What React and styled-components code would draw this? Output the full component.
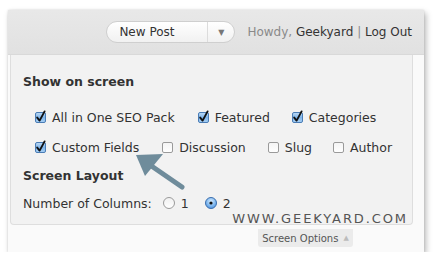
import React from "react";
import styled, { createGlobalStyle } from "styled-components";

const Global = createGlobalStyle`
  html, body { margin: 0; padding: 0; background: #ffffff; }
  body { font-family: "DejaVu Sans", "Liberation Sans", sans-serif; }
`;

const Frame = styled.div`
  position: relative;
  margin: 10px 0 0 8px;
  width: 416px;
  height: 242px;
  background: #fafafa;
  box-shadow: 2px 3px 6px rgba(0, 0, 0, 0.28), 0 0 2px rgba(0, 0, 0, 0.12);
  display: flex;
  flex-direction: column;
`;

const Header = styled.div`
  height: 45px;
  flex: none;
  display: flex;
  align-items: center;
  justify-content: flex-end;
  padding-right: 12px;
  background: linear-gradient(#e8e8e8, #e1e1e1);
  border-bottom: 1px solid #d9d9d9;
  box-sizing: border-box;
`;

const Select = styled.div`
  width: 129px;
  height: 22px;
  box-sizing: border-box;
  border: 1px solid #cfcfcf;
  border-radius: 11px;
  background: linear-gradient(#ffffff, #f1f1f1);
  display: flex;
  align-items: center;
  margin-right: 12px;
  font-size: 12px;
  color: #333;
`;

const SelectLabel = styled.span`
  flex: 1;
  padding-left: 12px;
`;

const SelectArrow = styled.span`
  width: 26px;
  height: 100%;
  border-left: 1px solid #dcdcdc;
  display: flex;
  align-items: center;
  justify-content: center;
  font-size: 8px;
  color: #777;
`;

const Greeting = styled.div`
  font-size: 12px;
  color: #333;
`;

const Muted = styled.span`
  color: #8a8a8a;
`;

const Body = styled.div`
  flex: 1;
  display: flex;
  flex-direction: column;
  padding: 0 11px 0 2px;
`;

const Panel = styled.div`
  position: relative;
  height: 170px;
  box-sizing: border-box;
  background: #f2f2f2;
  border: 1px solid #dedede;
  border-top: none;
  border-radius: 0 0 4px 4px;
  padding: 17px 0 0 12px;
  color: #333;
  font-size: 12.5px;
`;

const Heading = styled.div`
  font-weight: bold;
  font-size: 12.5px;
  color: #333;
  height: 20px;
  line-height: 20px;
  margin-top: ${(p) => p.$mt || 0}px;
`;

const Row = styled.div`
  display: flex;
  align-items: center;
  height: 20px;
  margin-top: ${(p) => p.$mt || 0}px;
  padding-left: ${(p) => p.$pl || 0}px;
`;

const Item = styled.label`
  display: flex;
  align-items: center;
  gap: 6px;
  margin-right: ${(p) => p.$mr}px;
  white-space: nowrap;
`;

const Box = styled.svg`
  flex: none;
  overflow: visible;
`;

const Checkbox = ({ checked }) => (
  <Box width="11" height="11" viewBox="0 0 11 11">
    <defs>
      <linearGradient id="cbOn" x1="0" y1="0" x2="0" y2="1">
        <stop offset="0" stopColor="#bfdcf7" />
        <stop offset="0.5" stopColor="#7fb5ea" />
        <stop offset="1" stopColor="#a9d1f5" />
      </linearGradient>
      <linearGradient id="cbOff" x1="0" y1="0" x2="0" y2="1">
        <stop offset="0" stopColor="#f4f4f4" />
        <stop offset="1" stopColor="#ffffff" />
      </linearGradient>
    </defs>
    <rect
      x="0.5"
      y="0.5"
      width="10"
      height="10"
      rx="1.5"
      fill={checked ? "url(#cbOn)" : "url(#cbOff)"}
      stroke={checked ? "#4a7cb5" : "#9a9a9a"}
    />
    {checked && (
      <path
        d="M2.2 5.6 L4.6 8.6 L9.6 -0.6"
        fill="none"
        stroke="#111"
        strokeWidth="1.9"
        strokeLinecap="round"
        strokeLinejoin="round"
      />
    )}
  </Box>
);

const Radio = ({ checked }) => (
  <Box width="12" height="12" viewBox="0 0 12 12">
    <defs>
      <radialGradient id="rdOn" cx="0.5" cy="0.35" r="0.7">
        <stop offset="0" stopColor="#d6ecff" />
        <stop offset="0.6" stopColor="#7db6ee" />
        <stop offset="1" stopColor="#4a8ad8" />
      </radialGradient>
      <linearGradient id="rdOff" x1="0" y1="0" x2="0" y2="1">
        <stop offset="0" stopColor="#f0f0f0" />
        <stop offset="1" stopColor="#ffffff" />
      </linearGradient>
    </defs>
    <circle
      cx="6"
      cy="6"
      r="5.5"
      fill={checked ? "url(#rdOn)" : "url(#rdOff)"}
      stroke={checked ? "#3c6fae" : "#9a9a9a"}
    />
    {checked && <circle cx="6" cy="6" r="1.6" fill="#111" />}
  </Box>
);

const Watermark = styled.div`
  position: absolute;
  right: 4px;
  bottom: -2px;
  font-family: "DejaVu Sans", sans-serif;
  font-size: 13px;
  letter-spacing: 1.9px;
  color: #555;
`;

const Arrow = styled.svg`
  position: absolute;
  left: 121px;
  top: 92px;
`;

const TabRow = styled.div`
  display: flex;
  justify-content: flex-end;
  padding: 4px 60px 0 0;
`;

const Tab = styled.div`
  width: 95px;
  height: 18px;
  box-sizing: border-box;
  background: #ebebeb;
  border-radius: 0 0 3px 3px;
  display: flex;
  align-items: center;
  justify-content: center;
  gap: 5px;
  font-size: 10px;
  color: #555;
`;

const TabArrow = styled.span`
  font-size: 7px;
  color: #bbb;
`;

export default function App() {
  return (
    <>
      <Global />
      <Frame>
        <Header>
          <Select>
            <SelectLabel>New Post</SelectLabel>
            <SelectArrow>▼</SelectArrow>
          </Select>
          <Greeting>
            <Muted>Howdy,</Muted> Geekyard <Muted>|</Muted> Log Out
          </Greeting>
        </Header>
        <Body>
          <Panel>
            <Heading>Show on screen</Heading>
            <Row $mt={15} $pl={12}>
              <Item $mr={23}>
                <Checkbox checked /> All in One SEO Pack
              </Item>
              <Item $mr={22}>
                <Checkbox checked /> Featured
              </Item>
              <Item $mr={0}>
                <Checkbox checked /> Categories
              </Item>
            </Row>
            <Row $mt={10} $pl={12}>
              <Item $mr={23}>
                <Checkbox checked /> Custom Fields
              </Item>
              <Item $mr={22}>
                <Checkbox /> Discussion
              </Item>
              <Item $mr={21}>
                <Checkbox /> Slug
              </Item>
              <Item $mr={0}>
                <Checkbox /> Author
              </Item>
            </Row>
            <Heading $mt={9}>Screen Layout</Heading>
            <Row $mt={7}>
              <Item $mr={11}>Number of Columns:</Item>
              <Item $mr={16}>
                <Radio /> 1
              </Item>
              <Item $mr={0}>
                <Radio checked /> 2
              </Item>
            </Row>
            <Watermark>WWW.GEEKYARD.COM</Watermark>
            <Arrow width="60" height="50" viewBox="0 0 60 50">
              <line x1="50" y1="40" x2="18" y2="18" stroke="#6f8c9b" strokeWidth="5" strokeLinecap="round" />
              <polygon points="4,8 31,7 13,29" fill="#6f8c9b" />
            </Arrow>
          </Panel>
          <TabRow>
            <Tab>
              Screen Options <TabArrow>▲</TabArrow>
            </Tab>
          </TabRow>
        </Body>
      </Frame>
    </>
  );
}
